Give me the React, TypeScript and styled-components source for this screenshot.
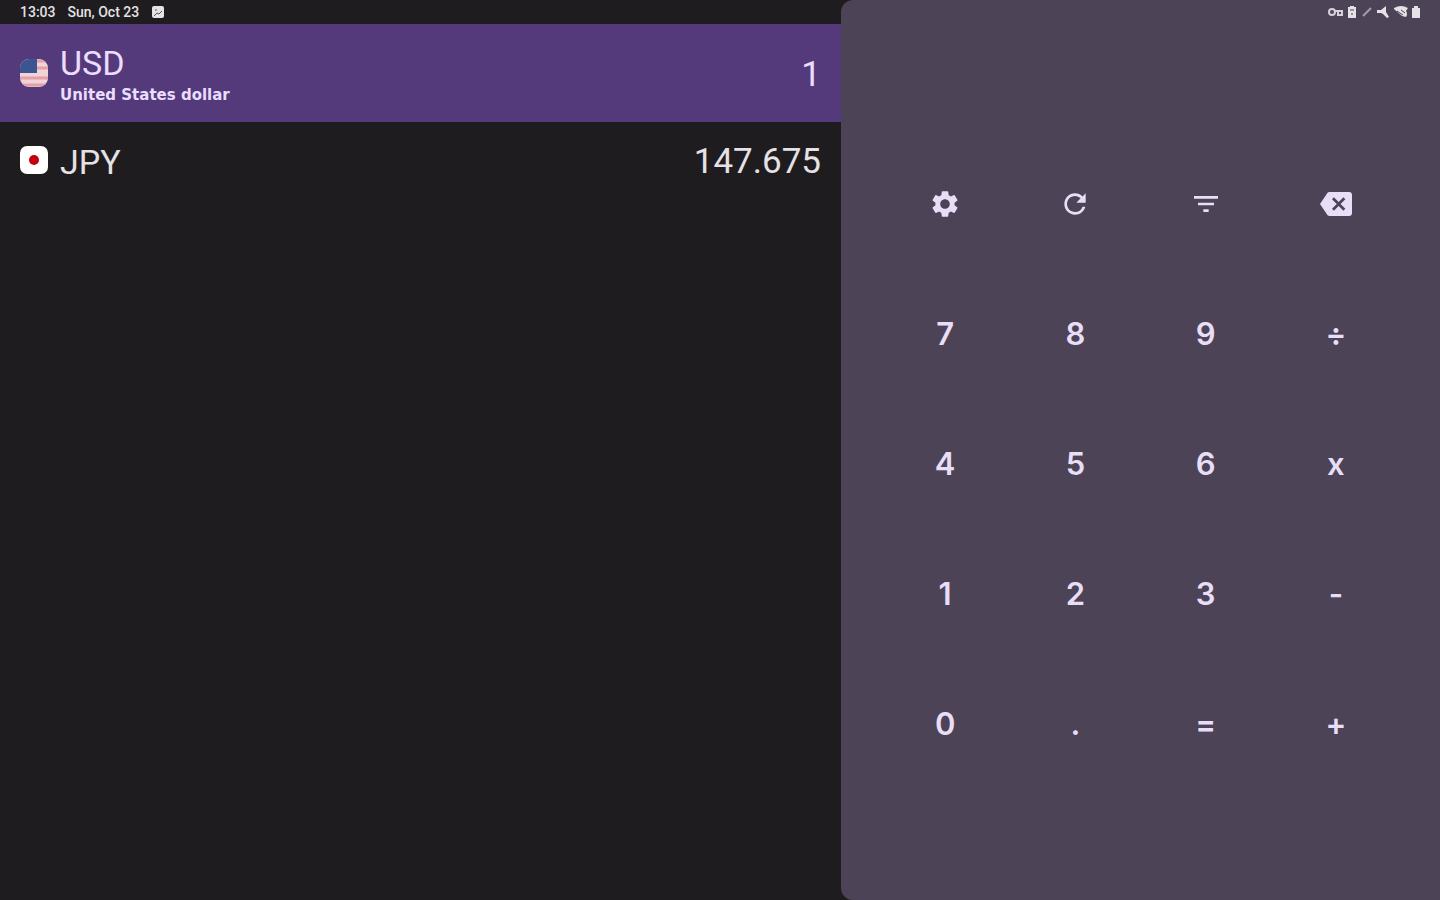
import React from "react";
import styled, { createGlobalStyle } from "styled-components";
import { MdBackspace, MdFilterList, MdRefresh, MdSettings } from "react-icons/md";

const GlobalStyle = createGlobalStyle`
  *, *::before, *::after { box-sizing: border-box; }
  body {
    margin: 0;
    background: #1e1c1e;
    font-family: Roboto, "Liberation Sans", sans-serif;
  }
`;

const Screen = styled.div`
  display: grid;
  grid-template-columns: 841fr 599fr;
  min-height: 100vh;
`;

const Rates = styled.main`
  min-width: 0;
`;

const StatusBar = styled.div<{ $end?: boolean }>`
  display: flex;
  align-items: center;
  justify-content: ${(p) => (p.$end ? "flex-end" : "flex-start")};
  gap: 12px;
  height: 24px;
  padding: 0 ${(p) => (p.$end ? 18 : 20)}px;
  color: #e4e2e6;
  font-size: 14px;
  line-height: 24px;
  font-weight: 500;
`;

const CurrencyList = styled.ul`
  list-style: none;
  margin: 0;
  padding: 0;
`;

const CurrencyRow = styled.button<{ $active?: boolean }>`
  display: flex;
  align-items: center;
  gap: 12px;
  width: 100%;
  height: ${(p) => (p.$active ? 98 : 76)}px;
  padding: 0 20px;
  border: 0;
  background: ${(p) => (p.$active ? "#543a7a" : "transparent")};
  color: ${(p) => (p.$active ? "#eaddff" : "#e6e1e5")};
  font-family: inherit;
  text-align: left;
  cursor: pointer;
`;

const Names = styled.span`
  display: flex;
  flex: 1;
  flex-direction: column;
  padding-top: 4px;
`;

const Code = styled.span`
  font-size: 34px;
  line-height: 40px;
`;

const FullName = styled.span`
  font-family: "DejaVu Sans", sans-serif;
  font-size: 15px;
  line-height: 24px;
  font-weight: 700;
`;

const Amount = styled.span`
  padding-top: 4px;
  font-size: 35px;
  line-height: 40px;
`;

const Panel = styled.aside`
  display: flex;
  flex-direction: column;
  border-radius: 12px 0 0 12px;
  background: #4c4356;
`;

const Keypad = styled.div`
  display: grid;
  grid-template-columns: repeat(4, 1fr);
  grid-auto-rows: 130px;
  margin: auto 0;
  padding: 4px 39px 0;
`;

const Key = styled.button`
  display: flex;
  align-items: center;
  justify-content: center;
  padding: 0;
  border: 0;
  background: transparent;
  color: #e8def8;
  font-family: Inter, sans-serif;
  font-size: 31px;
  line-height: 40px;
  font-weight: 600;
  cursor: pointer;
`;

const UsFlag = () => (
  <svg width="28" height="28" viewBox="0 0 28 28" aria-hidden="true">
    <clipPath id="us"><rect width="28" height="28" rx="9" /></clipPath>
    <g clipPath="url(#us)">
      <rect width="28" height="28" fill="#f1d3d8" />
      <path d="M0 2h28M0 9h28M0 19h28M0 26h28" stroke="#e3a0a8" strokeWidth="3" />
      <rect width="17" height="14" fill="#3b5590" />
    </g>
  </svg>
);

const JpFlag = () => (
  <svg width="28" height="28" viewBox="0 0 28 28" aria-hidden="true">
    <rect width="28" height="28" rx="7" fill="#fff" />
    <circle cx="14" cy="14" r="5" fill="#c4000c" />
  </svg>
);

const PictureIcon = () => (
  <svg width="14" height="14" viewBox="0 0 14 14" aria-hidden="true">
    <rect x="1" y="1" width="12" height="12" rx="2" fill="#e4e2e6" />
    <path d="M3 11l3-3 2 1 3-3M4 5h2" fill="none" stroke="#555" strokeWidth="1" />
  </svg>
);

const SystemIcons = () => (
  <svg width="94" height="14" viewBox="0 0 94 14" fill="#e4e2e6" role="img" aria-label="System status">
    <g fill="none" stroke="#d6d1da" strokeWidth="2">
      <circle cx="4" cy="7" r="3" />
      <path d="M7 6h7v4h-4V7" />
    </g>
    <path d="M22 1h4v1h2v11h-8V2h2z" />
    <path d="M22 5h4M23 9h2" stroke="#4c4356" strokeWidth="1" />
    <path d="M35 11l8-8" stroke="#a49dab" strokeWidth="2" />
    <path d="M49 5h4l5-4v6l3 5-2 1-4-4-2-1h-4z" />
    <path d="M66 3q7-4 14 0l-2 3q2 3 0 6l-4-1-8-7z" />
    <path d="M69 6l6 4M73 5l4 3" stroke="#4c4356" strokeWidth="1" />
    <path d="M86 1h4v2h2v10h-8V3h2z" />
  </svg>
);

const keys: { label: string; face: React.ReactNode }[] = [
  { label: "Settings", face: <MdSettings size={32} /> },
  { label: "Refresh rates", face: <MdRefresh size={32} /> },
  { label: "Filter currencies", face: <MdFilterList size={32} /> },
  { label: "Backspace", face: <MdBackspace size={32} /> },
  ...["7", "8", "9", "÷", "4", "5", "6", "x", "1", "2", "3", "-", "0", ".", "=", "+"].map(
    (c) => ({ label: c, face: c }),
  ),
];

export default function App() {
  return (
    <>
      <GlobalStyle />
      <Screen>
        <Rates>
          <StatusBar>
            <span>13:03</span>
            <span>Sun, Oct 23</span>
            <PictureIcon />
          </StatusBar>
          <CurrencyList>
            <li>
              <CurrencyRow type="button" $active>
                <UsFlag />
                <Names>
                  <Code>USD</Code>
                  <FullName>United States dollar</FullName>
                </Names>
                <Amount>1</Amount>
              </CurrencyRow>
            </li>
            <li>
              <CurrencyRow type="button">
                <JpFlag />
                <Names>
                  <Code>JPY</Code>
                </Names>
                <Amount>147.675</Amount>
              </CurrencyRow>
            </li>
          </CurrencyList>
        </Rates>
        <Panel>
          <StatusBar $end>
            <SystemIcons />
          </StatusBar>
          <Keypad>
            {keys.map((k) => (
              <Key key={k.label} type="button" aria-label={k.label}>
                {k.face}
              </Key>
            ))}
          </Keypad>
        </Panel>
      </Screen>
    </>
  );
}
